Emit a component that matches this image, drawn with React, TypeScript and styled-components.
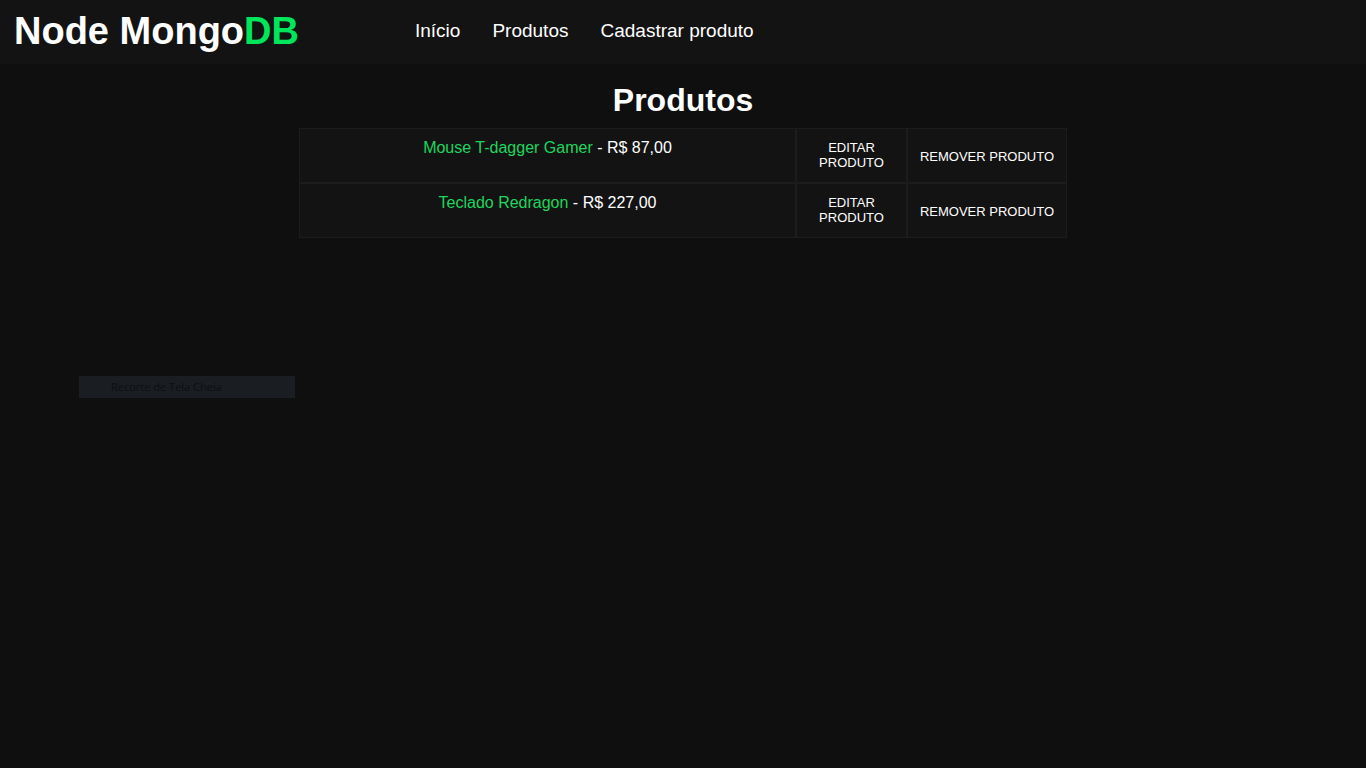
import React from "react";
import styled, { createGlobalStyle } from "styled-components";

const Global = createGlobalStyle`
  html, body { margin: 0; padding: 0; background: #0f0f0f; }
  body { font-family: "Liberation Sans", Arial, sans-serif; color: #fff; min-height: 768px; }
  * { box-sizing: border-box; }
`;

const Page = styled.div`
  position: relative;
  min-height: 768px;
  background: #0f0f0f;
`;

const Header = styled.header`
  height: 64px;
  background: #131313;
  display: flex;
  align-items: center;
  padding-left: 14px;
`;

const Logo = styled.div`
  font-size: 38px;
  font-weight: 700;
  color: #fff;
  width: 401px;
  line-height: 1;
  margin-top: -2px;
`;

const Green = styled.span<{ $tone?: "bright" | "soft" }>`
  color: ${(p) => (p.$tone === "soft" ? "#1ed65d" : "#00e65a")};
`;

const Nav = styled.nav`
  display: flex;
  gap: 32px;
  margin-top: -2px;
`;

const NavLink = styled.a`
  font-size: 19px;
  color: #fff;
  text-decoration: none;
`;

const Main = styled.main`
  display: flex;
  flex-direction: column;
  align-items: center;
`;

const Title = styled.h1`
  font-size: 32px;
  font-weight: 700;
  margin: 18px 0 9px;
  line-height: 37px;
`;

const Table = styled.table`
  width: 768px;
  border-collapse: separate;
  border-spacing: 0;
  border: 0;
`;

const Cell = styled.td<{ $w: number; $top?: boolean; $nowrap?: boolean }>`
  width: ${(p) => p.$w}px;
  background: #131313;
  border: 1px solid #1c1c1c;
  text-align: center;
  vertical-align: ${(p) => (p.$top ? "top" : "middle")};
  padding: ${(p) => (p.$top ? "10px 10px 0" : "0 8px")};
  white-space: ${(p) => (p.$nowrap ? "nowrap" : "normal")};
  height: 55px;
  font-size: 16px;
`;

const ActionBtn = styled.a`
  display: inline-block;
  color: #fff;
  font-size: 13px;
  line-height: 15px;
  text-transform: uppercase;
  text-decoration: none;
`;

const White = styled.span`
  color: #fff;
`;

const Snip = styled.div`
  position: absolute;
  left: 79px;
  top: 376px;
  width: 216px;
  height: 22px;
  background: #1a1d21;
  color: #0e0f11;
  font-family: "Open Sans", "Noto Sans", sans-serif;
  font-size: 11px;
  line-height: 22px;
  padding-left: 32px;
`;

const products = [
  { name: "Mouse T-dagger Gamer", price: "R$ 87,00" },
  { name: "Teclado Redragon", price: "R$ 227,00" },
];

export default function App() {
  return (
    <Page>
      <Global />
      <Header>
        <Logo>
          Node Mongo<Green>DB</Green>
        </Logo>
        <Nav>
          <NavLink href="#">Início</NavLink>
          <NavLink href="#">Produtos</NavLink>
          <NavLink href="#">Cadastrar produto</NavLink>
        </Nav>
      </Header>
      <Main>
        <Title>Produtos</Title>
        <Table>
          <tbody>
            {products.map((p) => (
              <tr key={p.name}>
                <Cell $w={497} $top>
                  <Green $tone="soft">{p.name}</Green>
                  <White> - {p.price}</White>
                </Cell>
                <Cell $w={111}>
                  <ActionBtn href="#">Editar produto</ActionBtn>
                </Cell>
                <Cell $w={160} $nowrap>
                  <ActionBtn href="#">Remover produto</ActionBtn>
                </Cell>
              </tr>
            ))}
          </tbody>
        </Table>
      </Main>
      <Snip>Recorte de Tela Cheia</Snip>
    </Page>
  );
}
